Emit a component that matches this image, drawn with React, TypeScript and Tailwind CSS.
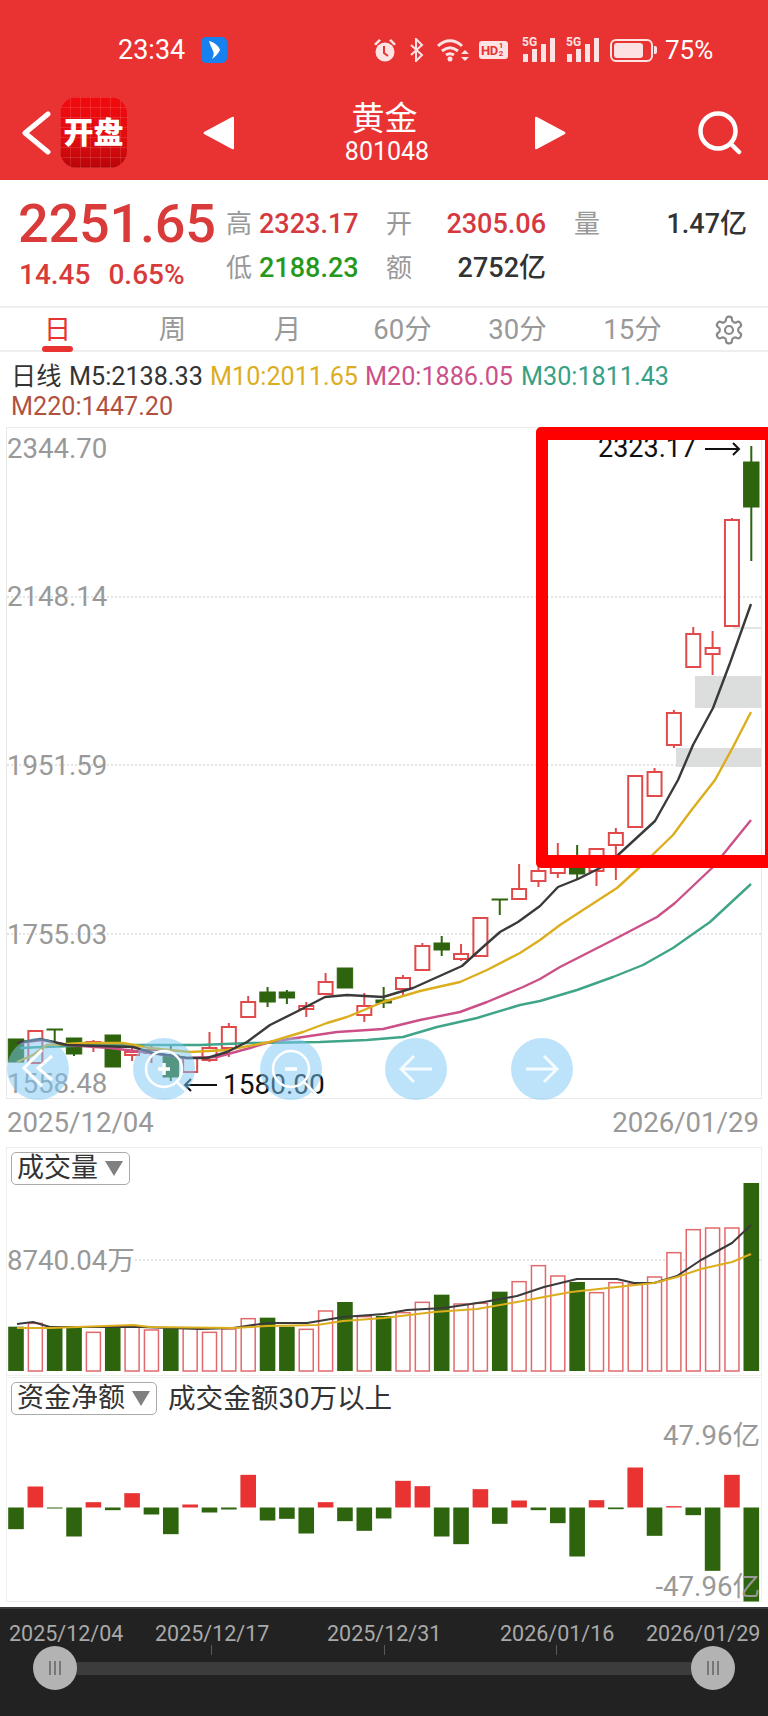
import React from "react";

const FONT = "font-['Roboto','Noto_Sans_CJK_SC',sans-serif]";
const cx = (i: number) => 16 + 19.35 * i;

type Candle = [string, number, number, number?, number?];
const candles: Candle[] = [
  ["g", 1039, 1062],
  ["r", 1031, 1063],
  ["g", 1029, 1030, 1029, 1042],
  ["g", 1038, 1054, 1038, 1056],
  ["r", 1042, 1045, 1040, 1052],
  ["g", 1035, 1067],
  ["r", 1052, 1055, 1048, 1061],
  ["r", 1050, 1053, 1044, 1063],
  ["g", 1055, 1077, 1045, 1081],
  ["r", 1058, 1072],
  ["r", 1048, 1060, 1032, 1062],
  ["r", 1027, 1048, 1023, 1057],
  ["r", 1002, 1017, 996, 1017],
  ["g", 992, 1002, 987, 1007],
  ["g", 992, 998, 990, 1004],
  ["r", 1006, 1009, 1002, 1017],
  ["r", 982, 994, 973, 994],
  ["g", 968, 988],
  ["r", 1006, 1015, 993, 1022],
  ["g", 1000, 1003, 987, 1008],
  ["r", 978, 989, 975, 996],
  ["r", 946, 970, 943, 970],
  ["g", 943, 950, 936, 956],
  ["r", 954, 959, 944, 961],
  ["r", 918, 956],
  ["g", 899, 900, 899, 915],
  ["r", 889, 899, 864, 899],
  ["r", 871, 881, 862, 887],
  ["r", 867, 873, 843, 878],
  ["g", 861, 874, 845, 880],
  ["r", 849, 871, 849, 886],
  ["r", 833, 845, 828, 880],
  ["r", 776, 827],
  ["r", 772, 796, 768, 796],
  ["r", 713, 745, 710, 748],
  ["r", 634, 667, 627, 667],
  ["r", 648, 654, 631, 675],
  ["r", 520, 626, 518, 626],
  ["g", 462, 507, 446, 561],
];

const ma5 = "17,1043 40,1039 67,1045 100,1046 133,1047 153,1053 187,1058 207,1058 227,1052 247,1042 270,1025 300,1010 325,997 347,995 383,997 413,988 462,966 483,947 500,932 518,922 540,906 558,887 578,879 602,867 618,855 655,821 678,780 693,745 713,708 730,663 751,604";
const ma10 = "17,1062 33,1055 47,1045 83,1043 123,1043 150,1048 190,1052 227,1050 270,1042 303,1032 327,1023 347,1017 383,1002 420,991 460,982 487,970 520,953 540,940 560,925 583,910 617,888 640,867 673,835 690,812 715,780 733,747 751,712";
const ma20 = "17,1043 43,1040 67,1045 110,1048 143,1052 187,1058 217,1057 250,1048 270,1042 303,1037 337,1032 383,1029 420,1020 460,1012 487,1002 523,987 540,979 560,967 613,940 657,917 675,903 713,867 751,820";
const ma30 = "20,1048 43,1047 100,1045 143,1045 200,1045 250,1043 320,1042 367,1040 403,1037 437,1027 477,1018 520,1005 540,1001 577,990 613,977 643,965 673,948 710,922 751,884";

const volTops = [590,580,592,592,607,592,590,600,595,595,607,597,566,563,590,598,543,516,560,558,548,517,494,522,520,485,455,407,438,456,488,458,462,441,368,299,294,294,159];
const volBlack = "17,1324 33,1322 50,1327 87,1327 140,1327 200,1329 233,1328 267,1323 307,1323 343,1317 384,1314 407,1310 444,1308 484,1302 517,1296 544,1287 577,1279 617,1279 634,1283 654,1283 677,1276 701,1260 732,1243 751,1225";
const volYellow = "17,1328 50,1328 133,1325 150,1327 233,1328 267,1326 317,1325 343,1321 384,1318 434,1312 477,1309 517,1302 571,1292 617,1287 654,1283 677,1277 701,1269 732,1262 751,1254";

const funds = [-65,63,-3,-87,16,-8,43,-21,-80,9,-15,-6,98,-39,-34,-78,16,-41,-70,-33,80,64,-87,-110,55,-49,21,-8,-47,-147,22,-5,120,-85,4,-23,-190,98,-282];

function Tag({ text }: { text: string }) {
  return (
    <div className="flex h-full items-center rounded-[5px] border border-[#aaaaaa] bg-white pl-[5px] pr-[6px]">
      <span className="text-[27px] leading-none text-[#333333]">{text}</span>
      <svg width="18" height="15" viewBox="0 0 18 15" className="ml-[7px]">
        <path d="M0 0h18L9 15z" fill="#808080" />
      </svg>
    </div>
  );
}

function Circle({ left, children }: { left: number; children: React.ReactNode }) {
  return (
    <div className="absolute top-[610px] flex h-[62px] w-[62px] items-center justify-center rounded-full bg-[#7cc8f8]/50" style={{ left }}>
      {children}
    </div>
  );
}

function Arrow({ dir }: { dir: "l" | "r" }) {
  return (
    <svg width="34" height="30" viewBox="0 0 34 30" fill="none" stroke="#fff" strokeOpacity=".85" strokeWidth="3">
      {dir === "l" ? <path d="M33 15H2M15 2L2 15l13 13" /> : <path d="M1 15h31M19 2l13 13-13 13" />}
    </svg>
  );
}

function Lens({ plus }: { plus?: boolean }) {
  return (
    <svg width="62" height="62" viewBox="0 0 62 62" fill="none" stroke="#fff" strokeWidth="2.5">
      <circle cx="31" cy="31" r="18" />
      <path d="M44 44l14 14" />
      <path d={plus ? "M25 31h12M31 25v12" : "M25 31h12"} strokeWidth="3.5" />
    </svg>
  );
}

function Signal() {
  return (
    <div className="relative h-[24px] w-[33px]">
      <span className="absolute left-0 top-[-3px] text-[12px] font-bold leading-[14px] text-[#fde3e3]">5G</span>
      <svg width="33" height="24" viewBox="0 0 33 24" fill="#fde3e3">
        <rect x="1" y="16" width="5" height="8" />
        <rect x="10" y="11" width="5" height="13" />
        <rect x="19" y="6" width="5" height="18" />
        <rect x="28" y="0" width="5" height="24" />
      </svg>
    </div>
  );
}

const dashed = "absolute left-0 right-0 h-0 border-t-2 border-dotted border-[#e4e4e4]";
const axis = "absolute left-0 text-[27.6px] leading-none text-[#999999]";

export default function App() {
  return (
    <div className={`${FONT} flex h-[1716px] w-[768px] flex-col overflow-hidden bg-white`}>
      {/* Header */}
      <header className="h-[180px] shrink-0 bg-[#e93232] pt-[37px] text-white">
        <div className="flex h-[26px] items-center pl-[118px]">
          <span className="w-[67px] text-[27px] font-normal leading-none text-[#fff]">23:34</span>
          <div className="ml-[16px] flex h-[26px] w-[26px] items-center justify-center rounded-[5px] bg-[#1782ef]">
            <svg width="14" height="20" viewBox="0 0 14 20" fill="#fff"><path d="M2 1c5 1 10 5 11 9-2 4-5 7-8 9 2-4 2-6 1-8C5 8 3 5 2 1z" /></svg>
          </div>
          <svg className="ml-[146px]" width="24" height="24" viewBox="0 0 24 24" fill="#fde3e3">
            <circle cx="12" cy="14" r="9.5" />
            <path d="M1 6l5-5 2 1.5-5 5zM23 6l-5-5-2 1.5 5 5z" />
            <path d="M11 8v7l4 3" fill="none" stroke="#e93232" strokeWidth="2" />
          </svg>
          <svg className="ml-[12px]" width="15" height="24" viewBox="0 0 15 24" fill="none" stroke="#fde3e3" strokeWidth="2">
            <path d="M2 7l11 10-6 6V1l6 6L2 17" />
          </svg>
          <svg className="ml-[13px]" width="32" height="24" viewBox="0 0 32 24" fill="none" stroke="#fde3e3" strokeWidth="3">
            <path d="M1 8c7-7 17-7 24 0M5 13c5-4 11-4 16 0M9 17c3-2 5-2 8 0" />
            <circle cx="13" cy="21" r="2.5" fill="#fde3e3" stroke="none" />
            <path d="M24 16h8l-4-4zM24 19h8l-4 4z" fill="#fde3e3" stroke="none" />
          </svg>
          <div className="ml-[10px] flex h-[18px] w-[29px] items-center rounded-[3px] bg-[#fde3e3] pl-[2px] text-[13px] font-bold leading-none tracking-[-0.5px] text-[#e93232]">HD<span className="ml-[1px] text-[8px] leading-[8px]">1<br />2</span></div>
          <div className="ml-[14px]"><Signal /></div>
          <div className="ml-[11px]"><Signal /></div>
          <div className="ml-[11px] flex items-center">
            <div className="h-[23px] w-[43px] rounded-[6px] border-2 border-[#fde3e3] p-[2px]">
              <div className="h-full w-[29px] rounded-[3px] bg-[#fbe1e1]" />
            </div>
            <div className="ml-[1px] h-[8px] w-[3px] rounded-r-[2px] bg-[#fde3e3]" />
          </div>
          <span className="ml-[8px] text-[26px] font-normal leading-none text-[#fff]">75%</span>
        </div>
        <div className="mt-[34px] flex h-[71px] items-center pl-[22px]">
          <svg width="29" height="44" viewBox="0 0 29 44" fill="none" stroke="#fff" strokeWidth="5" strokeLinecap="round" strokeLinejoin="round">
            <path d="M26 3L3 22l23 19" />
          </svg>
          <div className="relative ml-[9px] flex h-[71px] w-[67px] items-center justify-center rounded-[17px] bg-[linear-gradient(180deg,#f20a0e_0%,#e00c10_60%,#b80508_100%)]">
            <div className="absolute inset-0 rounded-[17px] bg-[repeating-linear-gradient(90deg,rgba(255,255,255,.12)_0,rgba(255,255,255,.12)_1px,transparent_1px,transparent_10px),repeating-linear-gradient(0deg,rgba(255,255,255,.12)_0,rgba(255,255,255,.12)_1px,transparent_1px,transparent_10px)]" />
            <span className="relative text-[30px] font-black leading-none text-white">开盘</span>
          </div>
          <svg className="ml-[76px]" width="31" height="34" viewBox="0 0 31 34" fill="#fff">
            <path d="M31 2v30q0 2-2 1L1 18q-1-1 0-2L29 1q2-1 2 1z" />
          </svg>
          <div className="ml-[103px] flex w-[100px] flex-col items-center">
            <span className="pr-[5px] text-[33px] leading-[36px]">黄金</span>
            <span className="mt-[3px] text-[25px] leading-[24px]">801048</span>
          </div>
          <svg className="ml-[98px]" width="31" height="34" viewBox="0 0 31 34" fill="#fff">
            <path d="M0 2v30q0 2 2 1l28-15q1-1 0-2L2 1Q0 0 0 2z" />
          </svg>
          <svg className="ml-[132px]" width="44" height="44" viewBox="0 0 44 44" fill="none" stroke="#fff" strokeWidth="4.5" strokeLinecap="round">
            <circle cx="20" cy="20" r="17.5" />
            <path d="M33 33l8 8" />
          </svg>
        </div>
      </header>

      {/* Quote */}
      <section className="flex h-[128px] shrink-0 border-b-2 border-[#eeeeee] pl-[18px]">
        <div className="w-[208px] shrink-0 pt-[17px] text-[#d93a3a]">
          <div className="text-[54px] font-medium leading-[54px] tracking-[-0.2px]">2251.65</div>
          <div className="ml-[1px] mt-[8px] flex text-[28px] font-medium leading-[32px]">
            <span>14.45</span>
            <span className="ml-[18px]">0.65%</span>
          </div>
        </div>
        <div className="box-content grid h-[88px] w-[521px] grid-cols-[160px_188px_173px] grid-rows-[44px_44px] items-center pt-[22px] text-[26px] leading-none text-[#999999]">
          <div className="flex items-center"><span>高</span><span className="ml-[7px] text-[27px] font-medium text-[#d5393f]">2323.17</span></div>
          <div className="flex w-[160px] items-center justify-between"><span>开</span><span className="text-[27px] font-medium text-[#d5393f]">2305.06</span></div>
          <div className="flex items-center justify-between"><span>量</span><span className="text-[27px] font-medium text-[#333333]">1.47亿</span></div>
          <div className="flex items-center"><span>低</span><span className="ml-[7px] text-[27px] font-medium text-[#27981c]">2188.23</span></div>
          <div className="flex w-[160px] items-center justify-between"><span>额</span><span className="text-[27px] font-medium text-[#333333]">2752亿</span></div>
          <div />
        </div>
      </section>

      {/* Tabs */}
      <nav className="relative flex h-[44px] shrink-0 items-center border-b-2 border-[#eeeeee] pt-[2px] text-[27.5px] leading-none text-[#999999]">
        <span className="w-[115px] text-center text-[#e93232]">日</span>
        <span className="w-[115px] text-center">周</span>
        <span className="w-[115px] text-center">月</span>
        <span className="w-[115px] text-center">60分</span>
        <span className="w-[115px] text-center">30分</span>
        <span className="w-[115px] text-center">15分</span>
        <svg className="ml-[23px]" width="32" height="32" viewBox="0 0 24 24" fill="none" stroke="#888888" strokeWidth="1.6" strokeLinejoin="round">
          <path d="M12.22 2h-.44a2 2 0 0 0-2 2v.18a2 2 0 0 1-1 1.73l-.43.25a2 2 0 0 1-2 0l-.15-.08a2 2 0 0 0-2.73.73l-.22.38a2 2 0 0 0 .73 2.73l.15.1a2 2 0 0 1 1 1.72v.51a2 2 0 0 1-1 1.74l-.15.09a2 2 0 0 0-.73 2.73l.22.38a2 2 0 0 0 2.73.73l.15-.08a2 2 0 0 1 2 0l.43.25a2 2 0 0 1 1 1.73V20a2 2 0 0 0 2 2h.44a2 2 0 0 0 2-2v-.18a2 2 0 0 1 1-1.73l.43-.25a2 2 0 0 1 2 0l.15.08a2 2 0 0 0 2.73-.73l.22-.39a2 2 0 0 0-.73-2.73l-.15-.08a2 2 0 0 1-1-1.74v-.5a2 2 0 0 1 1-1.74l.15-.09a2 2 0 0 0 .73-2.73l-.22-.38a2 2 0 0 0-2.73-.73l-.15.08a2 2 0 0 1-2 0l-.43-.25a2 2 0 0 1-1-1.73V4a2 2 0 0 0-2-2z" />
          <circle cx="12" cy="12" r="3" />
        </svg>
        <div className="absolute bottom-[-2px] left-[42px] h-[6px] w-[31px] rounded-[3px] bg-[#e93232]" />
      </nav>

      {/* Legend */}
      <section className="flex h-[75px] shrink-0 flex-col pl-[11px] pt-[10px] text-[25.2px] leading-[30px]">
        <div className="flex">
          <span className="w-[58px] text-[#333333]">日线</span>
          <span className="w-[141px] text-[#333333]">M5:2138.33</span>
          <span className="w-[155px] text-[#dcae1d]">M10:2011.65</span>
          <span className="w-[156px] text-[#cc5088]">M20:1886.05</span>
          <span className="text-[#38a084]">M30:1811.43</span>
        </div>
        <div className="text-[#b0523f]">M220:1447.20</div>
      </section>

      {/* Main chart */}
      <section className="relative ml-[6px] h-[672px] w-[756px] shrink-0 border border-[#e9e9e9]">
        <div className={`${dashed} top-[168px]`} />
        <div className={`${dashed} top-[336px]`} />
        <div className={`${dashed} top-[505px]`} />
        <svg className="absolute left-[-1px] top-[-1px]" width="756" height="672" viewBox="6 427 756 672" fill="none">
          <rect x="676" y="748" width="85" height="19" fill="#dcdddd" />
          <rect x="695" y="676" width="66" height="32" fill="#dcdddd" />
          <rect x="733" y="627" width="28" height="2" fill="#e4e4e4" />
          {candles.map((c, i) => {
            const x = cx(i);
            const [t, top, bot, wt, wb] = c;
            const col = t === "r" ? "#e04a4a" : "#2f640f";
            return (
              <g key={i}>
                {wt !== undefined && <line x1={x} x2={x} y1={wt} y2={wb} stroke={col} strokeWidth="2" />}
                {t === "r" ? (
                  <rect x={x - 7} y={top} width="14" height={bot - top} fill="#fff" stroke={col} strokeWidth="2" />
                ) : (
                  <rect x={x - 7.7} y={top} width="15.4" height={bot - top} fill={col} stroke={col} strokeWidth="1" />
                )}
              </g>
            );
          })}
          <polyline points={ma30} stroke="#3fa488" strokeWidth="2.4" strokeLinejoin="round" />
          <polyline points={ma20} stroke="#cc5088" strokeWidth="2.4" strokeLinejoin="round" />
          <polyline points={ma10} stroke="#dcae1d" strokeWidth="2.4" strokeLinejoin="round" />
          <polyline points={ma5} stroke="#3a3a3a" strokeWidth="2.4" strokeLinejoin="round" />
        </svg>
        <span className={`${axis} top-[7px]`}>2344.70</span>
        <span className={`${axis} top-[155px]`}>2148.14</span>
        <span className={`${axis} top-[324px]`}>1951.59</span>
        <span className={`${axis} top-[493px]`}>1755.03</span>
        <span className={`${axis} top-[642px]`}>1558.48</span>
        <span className="absolute left-[176px] top-[643px] flex items-center text-[28px] leading-none text-[#111111]">
          <svg className="mr-[6px]" width="34" height="14" viewBox="0 0 34 14" fill="none" stroke="#111" strokeWidth="2"><path d="M34 7H2M8 1L2 7l6 6" /></svg>
          1580.00
        </span>
        <span className="absolute left-[591px] top-[7px] flex items-center text-[27px] leading-none text-[#111111]">
          2323.17
          <svg className="ml-[9px]" width="36" height="14" viewBox="0 0 36 14" fill="none" stroke="#111" strokeWidth="2"><path d="M0 7h34M28 1l6 6-6 6" /></svg>
        </span>
        {/* Highlight frame */}
        <div className="absolute left-[529px] right-[-16px] top-[-1px] h-[441px] rounded-[5px] border-x-[12px] border-y-[13px] border-[#ff0000]" />
        {/* Floating buttons */}
        <Circle left={0}>
          <svg width="40" height="44" viewBox="0 0 40 44" fill="none" stroke="#fff" strokeWidth="3"><path d="M24 3L6 21l18 18M34 9L20 21l14 12" /></svg>
        </Circle>
        <Circle left={126}><Lens plus /></Circle>
        <Circle left={253}><Lens /></Circle>
        <Circle left={378}><Arrow dir="l" /></Circle>
        <Circle left={504}><Arrow dir="r" /></Circle>
      </section>

      {/* Dates */}
      <div className="flex h-[48px] shrink-0 items-center justify-between pl-[7px] pr-[9px] text-[27.6px] leading-none text-[#999999]">
        <span>2025/12/04</span>
        <span>2026/01/29</span>
      </div>

      {/* Volume */}
      <section className="relative ml-[6px] h-[229px] w-[756px] shrink-0 border border-[#eeeeee]">
        <div className={`${dashed} top-[111px] left-[128px]`} />
        <svg className="absolute left-[-1px] top-[-1px]" width="756" height="229" viewBox="6 1147 756 229" fill="none">
          {volTops.map((v, i) => {
            const top = 1130 + v / 3;
            const x = cx(i);
            const green = candles[i][0] === "g";
            return green ? (
              <rect key={i} x={x - 7.8} y={top} width="15.6" height={1371 - top} fill="#2f640f" />
            ) : (
              <rect key={i} x={x - 7} y={top} width="14" height={1371 - top} fill="#fff" stroke="#e2696b" strokeWidth="1.5" />
            );
          })}
          <polyline points={volBlack} stroke="#3a3a3a" strokeWidth="2" strokeLinejoin="round" />
          <polyline points={volYellow} stroke="#dcae1d" strokeWidth="2" strokeLinejoin="round" />
        </svg>
        <div className="absolute left-[4px] top-[4px] h-[33px]"><Tag text="成交量" /></div>
        <span className="absolute left-[0px] top-[99px] text-[27.6px] leading-none text-[#999999]">8740.04万</span>
      </section>

      {/* Funds */}
      <section className="relative ml-[6px] mt-[1px] h-[225px] w-[756px] shrink-0 border border-[#eeeeee]">
        <svg className="absolute left-[-1px] top-[-1px]" width="756" height="225" viewBox="6 1377 756 225">
          {funds.map((v, i) => {
            const h = Math.abs(v) / 3;
            const x = cx(i);
            return v > 0 ? (
              <rect key={i} x={x - 7.8} y={1507.5 - h} width="15.6" height={h} fill="#e93232" />
            ) : (
              <rect key={i} x={x - 7.8} y={1507.5} width="15.6" height={h} fill="#2f640f" />
            );
          })}
        </svg>
        <div className="absolute left-[4px] top-[4px] flex h-[33px] items-center">
          <Tag text="资金净额" />
          <span className="ml-[11px] whitespace-nowrap text-[27.6px] leading-none text-[#333333]">成交金额30万以上</span>
        </div>
        <span className="absolute right-[1px] top-[44px] text-[27.6px] leading-none text-[#999999]">47.96亿</span>
        <span className="absolute right-[1px] top-[195px] text-[27.6px] leading-none text-[#999999]">-47.96亿</span>
      </section>

      {/* Time slider */}
      <footer className="mt-[5px] flex min-h-0 grow flex-col border-t-2 border-[#3a3a3a] bg-[#222222]">
        <div className="flex h-[35px] shrink-0 items-end whitespace-nowrap pl-[9px] text-[21.5px] leading-none text-[#a9a9a9]">
          <span className="w-[113px]">2025/12/04</span>
          <span className="ml-[33px] w-[113px]">2025/12/17</span>
          <span className="ml-[59px] w-[113px]">2025/12/31</span>
          <span className="ml-[60px] w-[113px]">2026/01/16</span>
          <span className="ml-[33px] w-[113px]">2026/01/29</span>
        </div>
        <div className="relative mx-[33px] mt-[2px] flex h-[44px] items-center">
          <div className="mx-[22px] h-[13px] grow bg-[#3c3c3c]" />
          {[178, 351, 523].map((x) => (
            <div key={x} className="absolute top-[-1px] h-[10px] w-[1px] bg-[#5a5a5a]" style={{ left: x }} />
          ))}
          <div className="absolute left-0 flex h-[44px] w-[44px] items-center justify-center gap-[3px] rounded-full bg-[#b3b3b3]">
            <i className="h-[14px] w-[2px] bg-[#777777]" /><i className="h-[14px] w-[2px] bg-[#777777]" /><i className="h-[14px] w-[2px] bg-[#777777]" />
          </div>
          <div className="absolute right-0 flex h-[44px] w-[44px] items-center justify-center gap-[3px] rounded-full bg-[#b3b3b3]">
            <i className="h-[14px] w-[2px] bg-[#777777]" /><i className="h-[14px] w-[2px] bg-[#777777]" /><i className="h-[14px] w-[2px] bg-[#777777]" />
          </div>
        </div>
      </footer>
    </div>
  );
}
